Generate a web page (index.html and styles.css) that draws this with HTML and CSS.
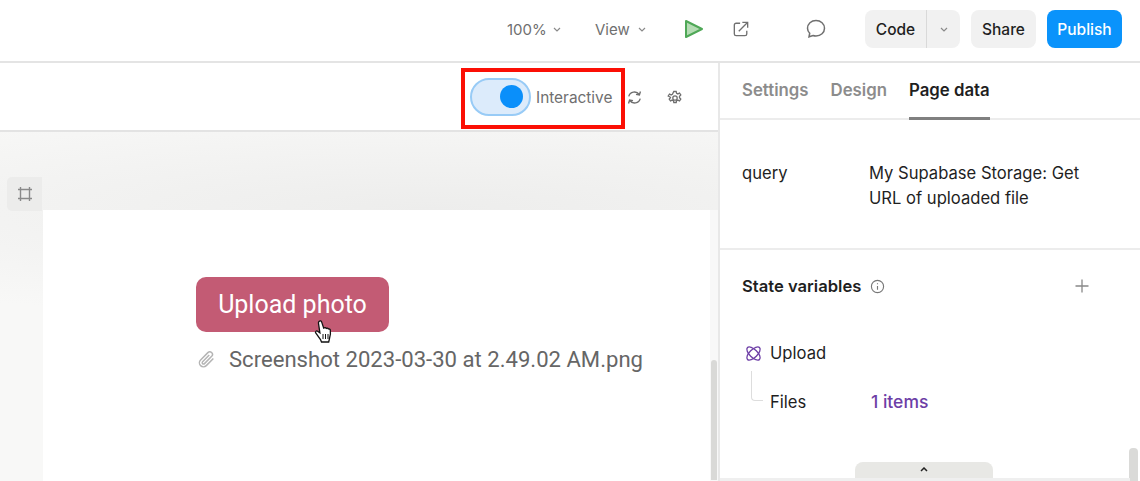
FILE: index.html
```html
<!DOCTYPE html>
<html lang="en">
<head>
    <meta charset="UTF-8">
    <title>Page data</title>
    <link rel="stylesheet" href="styles.css">
</head>
<body>
    <header class="topbar">
        <div class="menu-item">100% <svg class="chev" viewBox="0 0 8 5"><path d="M1 1l3 3 3-3"/></svg></div>
        <div class="menu-item view-item">View <svg class="chev" viewBox="0 0 8 5"><path d="M1 1l3 3 3-3"/></svg></div>
        <svg class="play" viewBox="0 0 20 20"><path d="M2 2l16 8-16 8z"/></svg>
        <svg class="open" viewBox="0 0 18 18"><path d="M8 2.5H3.500a2 2 0 0 0-2 2v10a2 2 0 0 0 2 2h10a2 2 0 0 0 2-2V11M6.500 11.500L16 2M10.500 1.500h6v6"/></svg>
        <svg class="comment" viewBox="0 0 20 20"><path d="M10 1.500c4.800 0 8.500 3.400 8.500 7.800s-3.700 7.700-8.500 7.700c-1.100 0-2.100-.2-3-.5l-4 1.300.7-3.600C2.300 12.800 1.500 11.200 1.500 9.300 1.500 4.900 5.200 1.500 10 1.500z"/></svg>
        <div class="code-btn">
            <span class="code-label">Code</span>
            <span class="code-arrow"><svg class="chev" viewBox="0 0 8 5"><path d="M1 1l3 3 3-3"/></svg></span>
        </div>
        <div class="btn share">Share</div>
        <div class="btn publish">Publish</div>
    </header>

    <div class="main">
        <section class="editor">
            <div class="toolbar">
                <div class="toggle"><span class="knob"></span></div>
                <span class="toggle-label">Interactive</span>
                <svg class="refresh" viewBox="0 0 16 16"><path d="M2.600 7A5.500 5.500 0 0 1 12.400 5.200M13.600 2.400L12.600 5.600 9.400 5M13.400 9A5.500 5.500 0 0 1 3.600 10.800M2.400 13.600L3.400 10.400 6.600 11"/></svg>
                <svg class="gear" viewBox="0 0 16 16"><circle cx="8" cy="8" r="2.200"/><path d="M6.800 1.500h2.400l.4 1.800 1.300.6 1.600-.9 1.300 2-1.300 1.300v1.400l1.300 1.300-1.300 2-1.600-.9-1.300.6-.4 1.800H6.800l-.4-1.800-1.300-.6-1.600.9-1.300-2 1.300-1.300V7.300L1.200 6l1.300-2 1.600.9 1.300-.6z"/></svg>
            </div>
            <div class="canvas">
                <div class="frame-tab">
                    <svg viewBox="0 0 16 16"><path d="M3.500 1v14M12.500 1v14M1 3.500h14M1 12.500h14"/></svg>
                </div>
                <div class="artboard">
                    <div class="upload-btn">Upload photo</div>
                    <div class="file-row">
                        <svg class="clip" viewBox="0 0 18 18"><path d="M15.500 8l-6.700 6.800a3.800 3.800 0 0 1-5.400-5.400l6.900-6.900a2.500 2.500 0 0 1 3.600 3.500l-6.800 6.900a1.200 1.200 0 0 1-1.800-1.800l6.300-6.300"/></svg>
                        <span>Screenshot 2023-03-30 at 2.49.02 AM.png</span>
                    </div>
                    <svg class="cursor" viewBox="0 0 20 26"><path d="M6 2.500c1-1 2.300-.6 2.700.6l2 6 .4-.2c.9-.5 1.800-.2 2.200.5.800-.4 1.700-.2 2.100.6.900-.3 1.700.2 1.900 1 .4 2.500.2 5.500-.8 8.500l-.8 3.500H8.500l-1-2.500-4.800-6.500c-.8-1.200.6-2.600 1.900-1.800l2.300 1.600L5.500 4.500c-.2-.8 0-1.500.5-2z"/><path class="cursor-lines" d="M10 15v5M12.500 15v5M15 15v5"/></svg>
                </div>
                <div class="scroll-track"><div class="scroll-thumb"></div></div>
            </div>
            <div class="red-box"></div>
        </section>

        <aside class="panel">
            <nav class="tabs">
                <span class="tab">Settings</span>
                <span class="tab">Design</span>
                <span class="tab active">Page data</span>
            </nav>
            <div class="query-row">
                <span class="query-label">query</span>
                <span class="query-value">My Supabase Storage: Get URL of uploaded file</span>
            </div>
            <div class="state-head">
                <span class="state-title">State variables</span>
                <svg class="info" viewBox="0 0 16 16"><circle cx="8" cy="8" r="6.500"/><path d="M8 7.500v4M8 4.500v1"/></svg>
                <svg class="plus" viewBox="0 0 14 14"><path d="M7 0.500v13M0.500 7h13"/></svg>
            </div>
            <div class="state-row upload-row">
                <svg class="atom" viewBox="0 0 18 18"><ellipse cx="9" cy="9" rx="9" ry="4.200" transform="rotate(45 9 9)"/><ellipse cx="9" cy="9" rx="9" ry="4.200" transform="rotate(-45 9 9)"/></svg>
                <span>Upload</span>
            </div>
            <div class="state-row files-row">
                <span class="tree-line"></span>
                <span class="files-label">Files</span>
                <span class="files-value">1 items</span>
            </div>
            <div class="handle"><svg viewBox="0 0 8 5"><path d="M1 4l3-3 3 3"/></svg></div>
            <div class="panel-scroll"></div>
            <div class="panel-bottom"></div>
        </aside>
    </div>
</body>
</html>
```

FILE: styles.css
```css
* {
    box-sizing: border-box;
}

body {
    margin: 0;
    width: 1140px;
    height: 481px;
    overflow: hidden;
    background-color: #ffffff;
    font-family: "Inter", sans-serif;
    color: #1f1f1f;
}

svg {
    display: block;
    fill: none;
}

/* top bar */
.topbar {
    height: 63px;
    display: flex;
    align-items: center;
    padding: 0 18px 3px 507px;
    border-bottom: 2px solid #e4e4e4;
}

.menu-item {
    display: flex;
    align-items: center;
    gap: 6px;
    width: 88px;
    font-size: 15px;
    color: #6f6f6f;
}

.view-item {
    width: 89px;
    gap: 8px;
}

.chev {
    width: 8px;
    height: 5px;
}

.chev path {
    stroke: #8a8a8a;
    stroke-width: 1.200;
}

.play {
    width: 20px;
    height: 20px;
}

.play path {
    fill: #b5dcb4;
    stroke: #4fa857;
    stroke-width: 2;
    stroke-linejoin: round;
}

.open {
    width: 16px;
    height: 16px;
    margin-left: 29px;
}

.open path,
.comment path {
    stroke: #707070;
    stroke-width: 1.500;
}

.comment {
    width: 20px;
    height: 20px;
    margin-left: 57px;
}

.code-btn {
    display: flex;
    height: 38px;
    width: 95px;
    margin-left: 39px;
    background-color: #f1f1f1;
    border-radius: 8px;
    font-size: 15.500px;
    font-weight: 500;
}

.code-label {
    width: 62px;
    display: flex;
    align-items: center;
    justify-content: center;
    border-right: 1px solid #d9d9d9;
}

.code-arrow {
    flex: 1;
    display: flex;
    align-items: center;
    justify-content: center;
}

.btn {
    display: flex;
    align-items: center;
    justify-content: center;
    height: 38px;
    border-radius: 8px;
    font-size: 15.500px;
    font-weight: 500;
}

.share {
    width: 65px;
    margin-left: 11px;
    background-color: #f1f1f1;
}

.publish {
    width: 75px;
    margin-left: 11px;
    background-color: #0a93fb;
    color: #ffffff;
}

/* main area */
.main {
    display: flex;
    height: 418px;
}

.editor {
    position: relative;
    width: 718px;
    display: flex;
    flex-direction: column;
}

.toolbar {
    height: 69px;
    display: flex;
    align-items: center;
    padding-left: 470px;
    border-bottom: 2px solid #e3e3e3;
}

.toggle {
    width: 61px;
    height: 38px;
    display: flex;
    align-items: center;
    justify-content: flex-end;
    padding-right: 6px;
    background-color: #dcebfb;
    border: 2px solid #98cbf6;
    border-radius: 19px;
}

.knob {
    width: 23px;
    height: 23px;
    border-radius: 50%;
    background-color: #0a8ffa;
}

.toggle-label {
    margin: 2px 0 0 5px;
    font-size: 15.400px;
    color: #6f6f6f;
}

.refresh {
    width: 17px;
    height: 17px;
    margin: 2px 0 0 14px;
}

.refresh path,
.gear circle,
.gear path {
    stroke: #6f6f6f;
    stroke-width: 1.300;
}

.gear {
    width: 16px;
    height: 16px;
    margin: 2px 0 0 24px;
}

.red-box {
    position: absolute;
    left: 461px;
    top: 5px;
    width: 164px;
    height: 61px;
    border: 4px solid #fb0f05;
}

/* canvas */
.canvas {
    flex: 1;
    display: flex;
    position: relative;
    padding: 78px 0 0 43px;
    background: radial-gradient(ellipse 800px 110px at 60% 78px, #ededec, #f8f8f7);
}

.frame-tab {
    position: absolute;
    left: 7px;
    top: 45px;
    width: 35px;
    height: 34px;
    display: flex;
    align-items: center;
    justify-content: center;
    background-color: #ececeb;
    border-radius: 5px 0 0 5px;
}

.frame-tab svg {
    width: 16px;
    height: 16px;
}

.frame-tab path {
    stroke: #8a8a8a;
    stroke-width: 1.400;
}

.artboard {
    position: relative;
    width: 667px;
    background-color: #ffffff;
    padding: 67px 0 0 153px;
}

.upload-btn {
    width: 193px;
    height: 55px;
    display: flex;
    align-items: center;
    justify-content: center;
    background-color: #c35b74;
    border-radius: 10px;
    color: #ffffff;
    font-family: "Roboto", sans-serif;
    font-size: 25px;
}

.file-row {
    display: flex;
    align-items: center;
    gap: 13px;
    margin: 14px 0 0 1px;
    font-family: "Roboto", sans-serif;
    font-size: 22.100px;
    color: #666666;
}

.clip {
    width: 19px;
    height: 19px;
}

.clip path {
    stroke: #b4b4b4;
    stroke-width: 1.400;
}

.cursor {
    position: absolute;
    left: 269px;
    top: 109px;
    width: 22px;
    height: 26px;
}

.cursor path {
    fill: #ffffff;
    stroke: #111111;
    stroke-width: 1.300;
}

.cursor .cursor-lines {
    stroke-width: 1;
}

.scroll-track {
    flex: 1;
    background-color: #f8f8f8;
    padding: 150px 0 0 1px;
}

.scroll-thumb {
    width: 6px;
    height: 120px;
    background-color: #d9d9d7;
    border-radius: 4px 4px 0 0;
}

/* right panel */
.panel {
    position: relative;
    flex: 1;
    border-left: 2px solid #e8e8e8;
    font-size: 16.600px;
}

.tabs {
    height: 57px;
    display: flex;
    gap: 22px;
    padding-left: 22px;
    border-bottom: 2px solid #ececec;
}

.tab {
    height: 57px;
    padding-top: 17px;
    font-size: 16.800px;
    font-weight: 600;
    color: #8c8c8c;
}

.tab.active {
    color: #1f1f1f;
    border-bottom: 3px solid #808080;
}

.query-row {
    height: 130px;
    display: flex;
    padding: 41px 40px 0 22px;
    line-height: 25px;
    border-bottom: 2px solid #ececec;
}

.query-label {
    width: 127px;
    flex: none;
}

.state-head {
    display: flex;
    align-items: center;
    height: 72px;
    padding: 0 51px 0 22px;
}

.state-title {
    font-weight: 600;
}

.info {
    width: 15px;
    height: 15px;
    margin-left: 9px;
}

.info circle,
.info path {
    stroke: #777777;
    stroke-width: 1.200;
}

.plus {
    width: 14px;
    height: 14px;
    margin-left: auto;
}

.plus path {
    stroke: #888888;
    stroke-width: 1.300;
}

.state-row {
    display: flex;
    align-items: center;
    padding-left: 25px;
}

.upload-row {
    gap: 8px;
    margin-top: 21px;
}

.atom {
    width: 17px;
    height: 17px;
    overflow: visible;
}

.atom ellipse {
    stroke: #6d3ea6;
    stroke-width: 1.400;
}

.files-row {
    position: relative;
    margin-top: 28px;
    padding-left: 50px;
}

.tree-line {
    position: absolute;
    left: 31px;
    top: -20px;
    width: 12px;
    height: 30px;
    border-left: 1px solid #dddddd;
    border-bottom: 1px solid #dddddd;
    border-bottom-left-radius: 4px;
}

.files-label {
    width: 101px;
}

.files-value {
    font-size: 17.500px;
    font-weight: 500;
    color: #6d3ea6;
}

.handle {
    position: absolute;
    left: 135px;
    bottom: 2px;
    width: 138px;
    height: 17px;
    display: flex;
    justify-content: center;
    padding-top: 5px;
    background-color: #e8e8e5;
    border-radius: 8px 8px 0 0;
}

.handle svg {
    width: 8px;
    height: 5px;
}

.handle path {
    stroke: #222222;
    stroke-width: 1.500;
}

.panel-scroll {
    position: absolute;
    right: 2px;
    bottom: 0;
    width: 9px;
    height: 33px;
    background-color: #dadad8;
    border-radius: 4px 4px 0 0;
}

.panel-bottom {
    position: absolute;
    left: 0;
    right: 10px;
    bottom: 0;
    height: 3px;
    background-color: #efefef;
}
```
